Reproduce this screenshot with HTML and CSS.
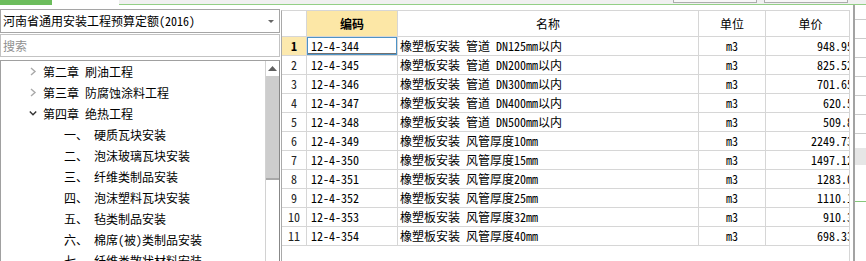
FILE: index.html
```html
<!DOCTYPE html>
<html lang="zh">
<head>
    <meta charset="UTF-8">
    <title>定额库</title>
    <link rel="stylesheet" href="styles.css">
</head>
<body>
    <div class="topbar">
        <div class="tab tab-on"></div>
        <div class="tab tab-white"></div>
        <div class="tab-rest">
            <span class="top-btn"></span>
            <span class="top-btn"></span>
        </div>
    </div>
    <div class="main">
        <div class="side">
            <div class="combo">
                <span>河南省通用安装工程预算定额(2016)</span>
                <i class="caret"></i>
            </div>
            <div class="search">搜索</div>
            <div class="tree">
                <ul class="tree-list">
                    <li class="node"><svg class="chev" width="8" height="9" viewBox="0 0 8 9"><path d="M2 1 L6 4.5 L2 8" fill="none" stroke="#a9a9a9" stroke-width="1.4"/></svg>第二章 刷油工程</li>
                    <li class="node"><svg class="chev" width="8" height="9" viewBox="0 0 8 9"><path d="M2 1 L6 4.5 L2 8" fill="none" stroke="#a9a9a9" stroke-width="1.4"/></svg>第三章 防腐蚀涂料工程</li>
                    <li class="node"><svg class="chev" width="8" height="9" viewBox="0 0 8 9"><path d="M0.8 2.5 L4 5.7 L7.2 2.5" fill="none" stroke="#333" stroke-width="1.4"/></svg>第四章 绝热工程</li>
                    <li class="leaf"><span class="num">一、</span>硬质瓦块安装</li>
                    <li class="leaf"><span class="num">二、</span>泡沫玻璃瓦块安装</li>
                    <li class="leaf"><span class="num">三、</span>纤维类制品安装</li>
                    <li class="leaf"><span class="num">四、</span>泡沫塑料瓦块安装</li>
                    <li class="leaf"><span class="num">五、</span>毡类制品安装</li>
                    <li class="leaf"><span class="num">六、</span>棉席(被)类制品安装</li>
                    <li class="leaf"><span class="num">七、</span>纤维类散状材料安装</li>
                </ul>
                <div class="vscroll">
                    <div class="vs-up"><svg width="9" height="5" viewBox="0 0 9 5"><path d="M0 5 L4.5 0 L9 5 Z" fill="#606060"/></svg></div>
                    <div class="vs-thumb"></div>
                </div>
            </div>
        </div>

        <div class="grid">
            <div class="row head">
                <div class="cell"></div>
                <div class="cell c-sort">编码</div>
                <div class="cell c-mid">名称</div>
                <div class="cell c-mid">单位</div>
                <div class="cell c-mid">单价</div>
            </div>
            <div class="row">
                <div class="cell c-no on">1</div>
                <div class="cell c-code sel">12-4-344</div>
                <div class="cell c-name">橡塑板安装 管道 DN125mm以内</div>
                <div class="cell c-mid">m3</div>
                <div class="cell c-price">948.95</div>
            </div>
            <div class="row">
                <div class="cell c-no">2</div>
                <div class="cell c-code">12-4-345</div>
                <div class="cell c-name">橡塑板安装 管道 DN200mm以内</div>
                <div class="cell c-mid">m3</div>
                <div class="cell c-price">825.52</div>
            </div>
            <div class="row">
                <div class="cell c-no">3</div>
                <div class="cell c-code">12-4-346</div>
                <div class="cell c-name">橡塑板安装 管道 DN300mm以内</div>
                <div class="cell c-mid">m3</div>
                <div class="cell c-price">701.65</div>
            </div>
            <div class="row">
                <div class="cell c-no">4</div>
                <div class="cell c-code">12-4-347</div>
                <div class="cell c-name">橡塑板安装 管道 DN400mm以内</div>
                <div class="cell c-mid">m3</div>
                <div class="cell c-price">620.5</div>
            </div>
            <div class="row">
                <div class="cell c-no">5</div>
                <div class="cell c-code">12-4-348</div>
                <div class="cell c-name">橡塑板安装 管道 DN500mm以内</div>
                <div class="cell c-mid">m3</div>
                <div class="cell c-price">509.8</div>
            </div>
            <div class="row">
                <div class="cell c-no">6</div>
                <div class="cell c-code">12-4-349</div>
                <div class="cell c-name">橡塑板安装 风管厚度10mm</div>
                <div class="cell c-mid">m3</div>
                <div class="cell c-price">2249.73</div>
            </div>
            <div class="row">
                <div class="cell c-no">7</div>
                <div class="cell c-code">12-4-350</div>
                <div class="cell c-name">橡塑板安装 风管厚度15mm</div>
                <div class="cell c-mid">m3</div>
                <div class="cell c-price">1497.12</div>
            </div>
            <div class="row">
                <div class="cell c-no">8</div>
                <div class="cell c-code">12-4-351</div>
                <div class="cell c-name">橡塑板安装 风管厚度20mm</div>
                <div class="cell c-mid">m3</div>
                <div class="cell c-price">1283.0</div>
            </div>
            <div class="row">
                <div class="cell c-no">9</div>
                <div class="cell c-code">12-4-352</div>
                <div class="cell c-name">橡塑板安装 风管厚度25mm</div>
                <div class="cell c-mid">m3</div>
                <div class="cell c-price">1110.1</div>
            </div>
            <div class="row">
                <div class="cell c-no">10</div>
                <div class="cell c-code">12-4-353</div>
                <div class="cell c-name">橡塑板安装 风管厚度32mm</div>
                <div class="cell c-mid">m3</div>
                <div class="cell c-price">910.3</div>
            </div>
            <div class="row">
                <div class="cell c-no">11</div>
                <div class="cell c-code">12-4-354</div>
                <div class="cell c-name">橡塑板安装 风管厚度40mm</div>
                <div class="cell c-mid">m3</div>
                <div class="cell c-price">698.33</div>
            </div>
        </div>

        <div class="splitter"></div>

        <div class="rpanel">
            <div class="r-line first"></div>
            <div class="r-line"></div>
            <div class="r-line"></div>
            <div class="r-line"></div>
            <div class="r-line"></div>
            <div class="r-line"></div>
            <div class="r-line"></div>
            <div class="r-sel"></div>
            <div class="r-green"></div>
        </div>
    </div>
</body>
</html>
```

FILE: styles.css
```css
* {
    box-sizing: border-box;
}
body {
    margin: 0;
    width: 866px;
    height: 261px;
    overflow: hidden;
    background: #fff;
    font-family: "Noto Sans Mono CJK SC", "Noto Sans CJK SC", sans-serif;
    font-size: 12px;
    color: #000;
}

/* top tab strip */
.topbar {
    display: flex;
    height: 5px;
}
.tab-on {
    width: 52px;
    background: #6cbd5c;
}
.tab-white {
    width: 67px;
    background: #fff;
}
.tab-rest {
    flex: 1;
    display: flex;
    justify-content: flex-end;
    align-items: flex-start;
    gap: 7px;
    padding-right: 18px;
    background: #f0f0f0;
    border-bottom: 1px solid #93cf86;
}
.top-btn {
    width: 84px;
    height: 3px;
    border: 1px solid #adadad;
    border-top: none;
    background: #f7f7f7;
}

.main {
    display: flex;
    height: 256px;
}

/* left side: library + tree */
.side {
    width: 280px;
    padding-top: 4px;
    display: flex;
    flex-direction: column;
}
.combo {
    height: 24px;
    border: 1px solid #a5a5a5;
    padding-left: 2px;
    line-height: 22px;
    display: flex;
    justify-content: space-between;
    align-items: center;
    white-space: nowrap;
}
.caret {
    width: 0;
    height: 0;
    margin-right: 5px;
    border-left: 3px solid transparent;
    border-right: 3px solid transparent;
    border-top: 3px solid #666;
}
.search {
    height: 23px;
    margin-top: 1px;
    border: 1px solid #c3c3c3;
    padding-left: 2px;
    line-height: 21px;
    color: #8f8f8f;
}
.tree {
    flex: 1;
    margin-top: 3px;
    display: flex;
    border: 1px solid #a0a0a0;
    border-right-color: #888;
    border-bottom: none;
    overflow: hidden;
}
.tree-list {
    flex: 1;
    list-style: none;
    margin: 0;
    padding: 0;
}
.tree-list li {
    height: 21px;
    line-height: 21px;
    display: flex;
    align-items: center;
    white-space: nowrap;
}
.node {
    padding-left: 28px;
}
.chev {
    margin-right: 6px;
}
.leaf {
    padding-left: 63px;
}
.num {
    width: 30px;
}
.vscroll {
    width: 14px;
    border-left: 1px solid #d2d2d2;
    display: flex;
    flex-direction: column;
}
.vs-up {
    height: 15px;
    display: flex;
    align-items: center;
    justify-content: center;
    background: #fff;
}
.vs-thumb {
    height: 104px;
    background: #cdcdcd;
    border-bottom: 2px solid #a8a8a8;
}

/* grid */
.grid {
    width: 569px;
    margin-left: 1px;
    margin-top: 5px;
    border: 1px solid #d6d6d6;
    border-left-color: #a9a9a9;
    border-bottom: none;
    overflow: hidden;
}
.row {
    display: grid;
    grid-template-columns: 25px 91px 301px 67px 90px;
    height: 19px;
    border-bottom: 1px solid #d6d6d6;
    line-height: 18px;
    white-space: nowrap;
}
.row.head {
    height: 26px;
    line-height: 25px;
}
.cell {
    border-right: 1px solid #d6d6d6;
    overflow: hidden;
}
.c-sort {
    background: #fce7a6;
    font-weight: bold;
    text-align: center;
}
.c-mid {
    text-align: center;
}
.c-no {
    text-align: center;
    color: #222;
}
.c-no.on {
    background: #fce9ae;
    font-weight: bold;
    color: #000;
}
.c-code {
    padding-left: 4px;
}
.sel {
    box-shadow: inset 0 0 0 1px #4d93c6, inset 0 -2px 0 #707070;
}
.c-name {
    padding-left: 2px;
}
.c-price {
    text-align: right;
    padding-right: 2px;
}

/* splitter and right panel */
.splitter {
    width: 5px;
    border-right: 2px solid #a3a3a3;
}
.rpanel {
    flex: 1;
}
.r-line {
    height: 19px;
    border-bottom: 1px solid #cbcbcb;
}
.r-line.first {
    height: 15px;
}
.r-sel {
    height: 17px;
    margin-top: 14px;
    background: #e6e6e6;
}
.r-green {
    margin-top: 36px;
    border-top: 1px solid #86c77a;
}
```
